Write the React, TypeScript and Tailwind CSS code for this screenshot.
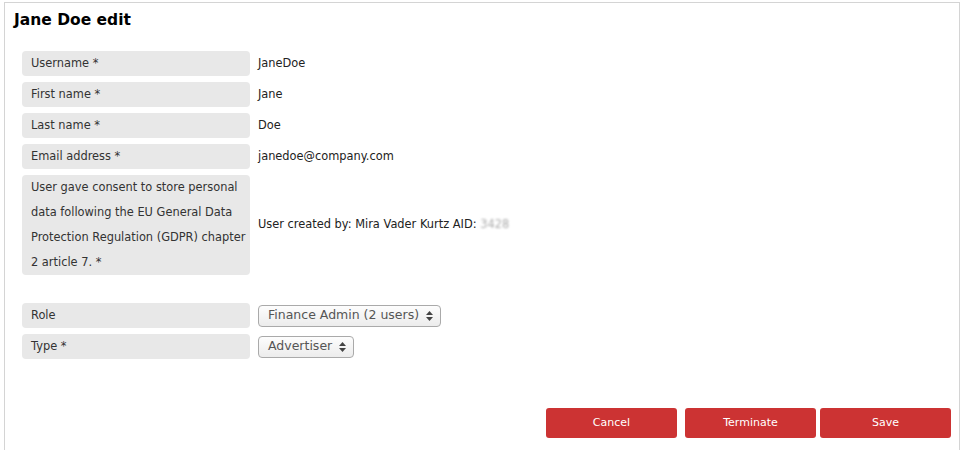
import React from "react";

const labelFont = { fontFamily: '"DejaVu Sans", Verdana, sans-serif' };

function Row({ label, value }: { label: React.ReactNode; value: React.ReactNode }) {
  return (
    <div className="flex items-center">
      <div className="w-[228px] shrink-0 rounded-[4px] bg-[#e8e8e8] pl-[9px] pr-0 text-[11.4px] leading-[25px] text-[#333]">
        {label}
      </div>
      <div className="pl-[8px] text-[11.4px] text-[#222]">{value}</div>
    </div>
  );
}

function Arrows() {
  return (
    <svg width="7" height="10" viewBox="0 0 7 10" className="ml-[7px]">
      <path d="M3.5 0 L7 4 L0 4 Z" fill="#444" />
      <path d="M3.5 10 L7 6 L0 6 Z" fill="#444" />
    </svg>
  );
}

function FakeSelect({ text }: { text: string }) {
  return (
    <div className="inline-flex h-[22px] items-center rounded-[4px] border border-[#aaa] bg-gradient-to-b from-[#fdfdfd] to-[#ececec] pl-[9px] pr-[7px] text-[12.5px] text-[#555]">
      <span>{text}</span>
      <Arrows />
    </div>
  );
}

export default function App() {
  return (
    <div className="h-[450px] w-[964px] overflow-hidden bg-white" style={labelFont}>
      <div className="ml-[4px] mt-[2px] h-[470px] w-[956px] border border-[#d4d4d4] bg-white">
        <h1 className="pl-[9px] pt-[6px] text-[15.5px] font-bold leading-[22px] text-black">Jane Doe edit</h1>
        <div className="pl-[17px] pt-[20px]">
          <div className="flex flex-col gap-[6px]">
            <Row label="Username *" value="JaneDoe" />
            <Row label="First name *" value="Jane" />
            <Row label="Last name *" value="Doe" />
            <Row label="Email address *" value="janedoe@company.com" />
            <Row
              label="User gave consent to store personal data following the EU General Data Protection Regulation (GDPR) chapter 2 article 7. *"
              value={
                <span>
                  User created by: Mira Vader Kurtz AID:{" "}
                  <span className="text-[#aaa] blur-[1.2px]">3428</span>
                </span>
              }
            />
          </div>
          <div className="mt-[28px] flex flex-col gap-[6px]">
            <Row label="Role" value={<FakeSelect text="Finance Admin (2 users)" />} />
            <Row label="Type *" value={<FakeSelect text="Advertiser" />} />
          </div>
        </div>
        <div className="mt-[49px] flex justify-end pr-[8px]">
          <button className="h-[30px] w-[131px] rounded-[3px] bg-[#cc3333] text-[11px] text-white">Cancel</button>
          <button className="ml-[8px] h-[30px] w-[131px] rounded-[3px] bg-[#cc3333] text-[11px] text-white">Terminate</button>
          <button className="ml-[4px] h-[30px] w-[131px] rounded-[3px] bg-[#cc3333] text-[11px] text-white">Save</button>
        </div>
      </div>
    </div>
  );
}
